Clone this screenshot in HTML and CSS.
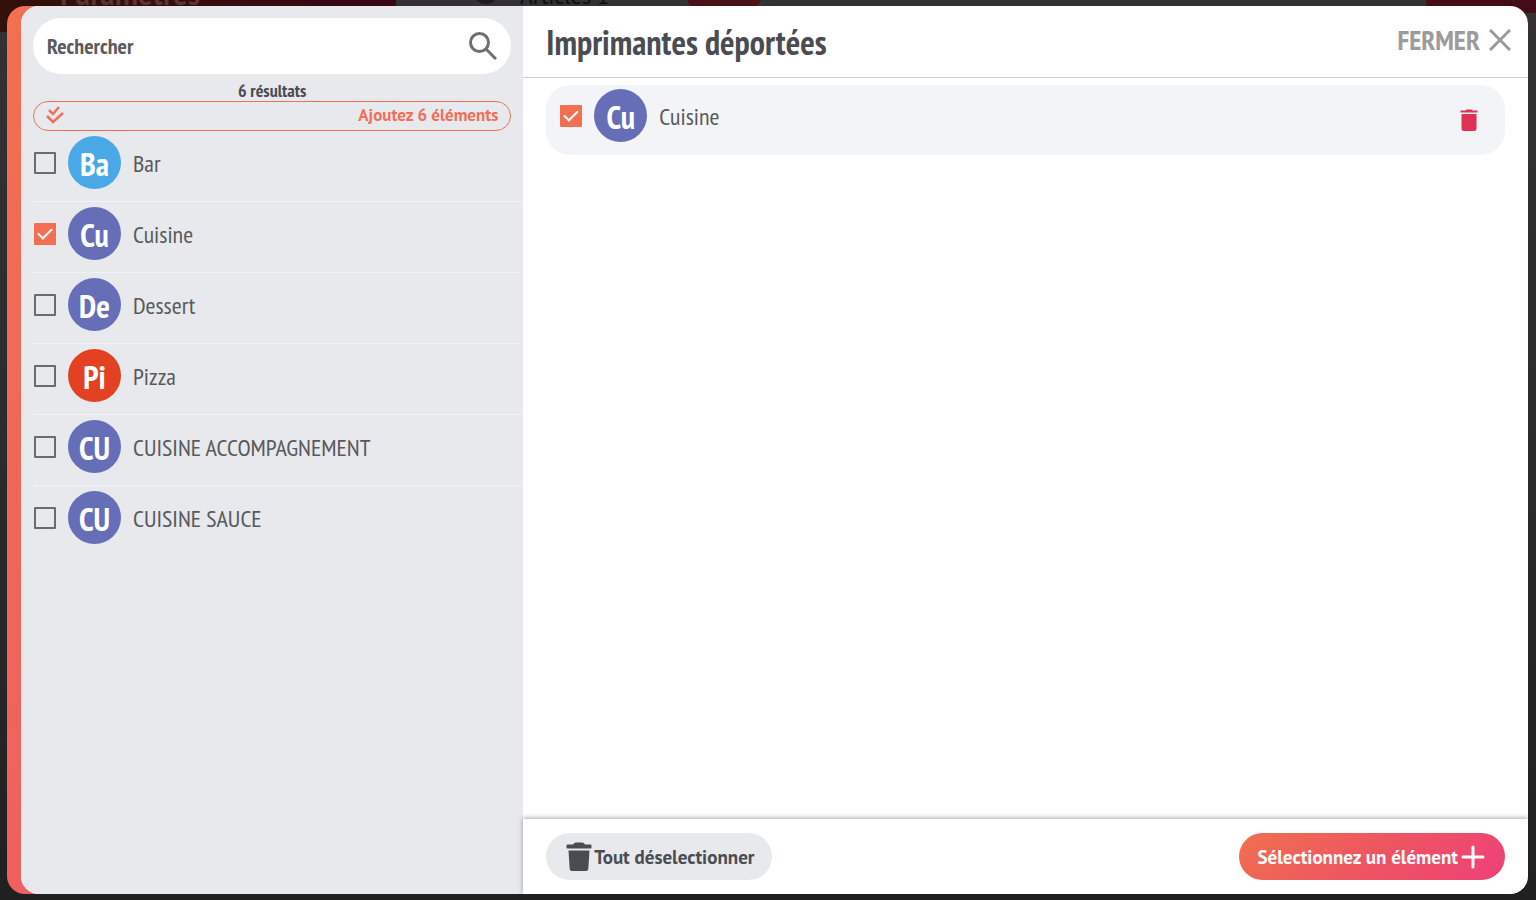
FILE: index.html
```html
<!DOCTYPE html>
<html lang="fr">
<head>
    <meta charset="UTF-8">
    <meta name="viewport" content="width=device-width, initial-scale=1.0">
    <title>Imprimantes déportées</title>
    <link rel="stylesheet" href="styles.css">
</head>
<body>

<!-- Page behind the dialog -->
<div class="backdrop" aria-hidden="true">
    <div class="backdrop-title">Paramètres</div>
    <div class="backdrop-dot"></div>
    <div class="backdrop-tab">Articles 1</div>
    <div class="backdrop-badge"></div>
    <div class="backdrop-action"></div>
</div>

<div class="dialog" role="dialog" aria-labelledby="title">
    <div class="content">

        <aside class="sidebar">
            <div class="search">
                <input type="text" class="search-input" placeholder="Rechercher" aria-label="Rechercher">
                <svg class="search-icon" viewBox="0 0 28 28">
                    <circle cx="10.5" cy="10.5" r="9" />
                    <path d="M17 17l10 10" />
                </svg>
            </div>
            <p class="results">6 résultats</p>
            <button class="add-all">
                <svg class="add-icon" viewBox="0 0 18 18">
                    <path d="M3 4l4 4 6-7" />
                    <path d="M1 10l6 6L17 7" />
                </svg>
                <span>Ajoutez 6 éléments</span>
            </button>

            <ul class="list">
                <li class="item">
                    <input type="checkbox" class="check" id="bar">
                    <span class="avatar blue">Ba</span>
                    <label for="bar">Bar</label>
                </li>
                <li class="item">
                    <input type="checkbox" class="check" id="cuisine" checked>
                    <span class="avatar">Cu</span>
                    <label for="cuisine">Cuisine</label>
                </li>
                <li class="item">
                    <input type="checkbox" class="check" id="dessert">
                    <span class="avatar">De</span>
                    <label for="dessert">Dessert</label>
                </li>
                <li class="item">
                    <input type="checkbox" class="check" id="pizza">
                    <span class="avatar red">Pi</span>
                    <label for="pizza">Pizza</label>
                </li>
                <li class="item">
                    <input type="checkbox" class="check" id="accompagnement">
                    <span class="avatar">CU</span>
                    <label for="accompagnement">CUISINE ACCOMPAGNEMENT</label>
                </li>
                <li class="item">
                    <input type="checkbox" class="check" id="sauce">
                    <span class="avatar">CU</span>
                    <label for="sauce">CUISINE SAUCE</label>
                </li>
            </ul>
        </aside>

        <main class="main">
            <header class="header">
                <h1 id="title">Imprimantes déportées</h1>
                <button class="close">
                    <span>FERMER</span>
                    <svg class="close-icon" viewBox="0 0 22 22">
                        <path d="M1 1l20 20M21 1L1 21" />
                    </svg>
                </button>
            </header>

            <div class="selection">
                <div class="card">
                    <input type="checkbox" class="check" id="selected-cuisine" checked>
                    <span class="avatar">Cu</span>
                    <label for="selected-cuisine">Cuisine</label>
                    <button class="remove" aria-label="Supprimer">
                        <svg viewBox="0 0 18 22">
                            <path d="M0.500 1.500h5l1-1h5l1 1h5v2h-17zM1.500 5h15v14.500a2.500 2.500 0 0 1-2.500 2.500h-10a2.500 2.500 0 0 1-2.500-2.500z" />
                        </svg>
                    </button>
                </div>
            </div>

            <footer class="footer">
                <button class="btn clear">
                    <svg class="trash-icon" viewBox="0 0 26 30">
                        <path d="M1.500 2.500h5.500q1-2 3-2h6q2 0 3 2h5.500q1 0 1 1v2q0 1-1 1h-23q-1 0-1-1v-2q0-1 1-1zM2.500 8.500h21l-1.200 18.500q-.2 2-2.200 2h-14.200q-2 0-2.200-2z" />
                    </svg>
                    <span>Tout déselectionner</span>
                </button>
                <button class="btn select">
                    <span>Sélectionnez un élément</span>
                    <svg class="plus-icon" viewBox="0 0 24 24">
                        <path d="M12 2v20M2 12h20" />
                    </svg>
                </button>
            </footer>
        </main>

    </div>
</div>

</body>
</html>
```
FILE: styles.css
```css
* {
    box-sizing: border-box;
}
body {
    margin: 0;
    height: 100vh;
    overflow: hidden;
    display: flex;
    padding: 6px 8px 6px 7px;
    background: linear-gradient(#343132, #2b2b2d 50%, #202021);
    font-family: "PT Sans Narrow", "Open Sans", sans-serif;
    color: #4b4c52;
}
button {
    border: none;
    background: none;
    padding: 0;
    font-family: inherit;
    color: inherit;
    cursor: pointer;
}
svg {
    display: block;
    fill: none;
    stroke: currentColor;
}

/* Dimmed page behind */
.backdrop {
    position: absolute;
    top: 0;
    left: 0;
    right: 0;
    height: 32px;
    overflow: hidden;
}
.backdrop div {
    position: absolute;
}
.backdrop-title {
    top: -26px;
    left: 0;
    width: 396px;
    height: 58px;
    padding-left: 60px;
    background: linear-gradient(90deg, #321109, #3a0714);
    color: #5a3534;
    font: bold 29px/40px "PT Sans", "Open Sans", sans-serif;
}
.backdrop-dot {
    top: -18px;
    left: 474px;
    width: 24px;
    height: 22px;
    border-radius: 50%;
    background: #1c1a1b;
}
.backdrop-tab {
    top: -16px;
    left: 520px;
    color: #0c0c0c;
    font: 22px/24px "PT Sans", "Open Sans", sans-serif;
}
.backdrop-badge {
    top: -20px;
    left: 686px;
    width: 76px;
    height: 30px;
    border-radius: 16px;
    background: #4c1019;
}
.backdrop-action {
    top: -20px;
    right: 0;
    width: 110px;
    height: 33px;
    border-radius: 0 0 0 12px;
    background: #430c18;
}

/* Dialog */
.dialog {
    position: relative;
    flex: 1;
    display: flex;
    padding-left: 14px;
    border-radius: 18px;
    overflow: hidden;
    background: linear-gradient(#f26f51, #ef6060);
}
.content {
    flex: 1;
    display: flex;
    border-radius: 18px;
    overflow: hidden;
    background: #fff;
}
.sidebar {
    flex: none;
    width: calc(100% / 3);
    padding: 12px 0 0 12px;
    background: #e7e9ed;
}
.search {
    display: flex;
    align-items: center;
    height: 56px;
    margin-right: 12px;
    padding: 0 14px;
    border-radius: 28px;
    background: #fff;
}
.search-input {
    flex: 1;
    min-width: 0;
    border: none;
    outline: none;
    padding: 0;
    background: none;
    font-family: inherit;
    font-size: 22px;
    font-weight: bold;
    line-height: 28px;
}
.search-input::placeholder {
    color: #5c5c5e;
    opacity: 1;
}
.search-icon {
    width: 28px;
    height: 28px;
    color: #6f6f70;
    stroke-width: 3;
}
.results {
    margin: 7px 12px 0 0;
    text-align: center;
    font-size: 18px;
    font-weight: bold;
    line-height: 20px;
}
.add-all {
    display: flex;
    align-items: center;
    justify-content: space-between;
    width: calc(100% - 12px);
    height: 30px;
    padding: 0 12px 2px;
    border: 1px solid #f26f57;
    border-radius: 15px;
    color: #f26f57;
    font: bold 17px/24px "PT Sans", "Open Sans", sans-serif;
}
.add-icon {
    width: 18px;
    height: 18px;
    stroke-width: 2.5;
}
.list {
    margin: 0;
    padding: 0;
    list-style: none;
}
.item {
    display: flex;
    height: 71px;
    padding: 5px 0 0 1px;
    border-bottom: 1px solid #f0f2f5;
}
.item:last-child {
    border-bottom: none;
}
.item label,
.card label {
    flex: 1;
    margin-left: 12px;
    font-size: 24px;
    line-height: 56px;
    color: #58595c;
}
.check {
    appearance: none;
    width: 22px;
    height: 22px;
    margin: 16px 12px 0 0;
    border: 2px solid #6b6b6d;
    border-radius: 1px;
}
.check:checked {
    border: none;
    background: #f26f51;
}
.check:checked::before {
    content: "";
    display: block;
    box-sizing: border-box;
    width: 14px;
    height: 8px;
    margin: 5px 0 0 4px;
    border-left: 2px solid #fff;
    border-bottom: 2px solid #fff;
    transform: rotate(-45deg);
}
.avatar {
    width: 53px;
    height: 53px;
    border-radius: 50%;
    background: #666eb7;
    color: #fff;
    font-size: 32px;
    font-weight: bold;
    line-height: 56px;
    text-align: center;
}
.blue {
    background: #49a8e5;
}
.red {
    background: #e34222;
}

/* Right side */
.main {
    flex: 1;
    display: flex;
    flex-direction: column;
}
.header {
    display: flex;
    justify-content: space-between;
    align-items: center;
    height: 72px;
    padding: 0 17px 0 23px;
    border-bottom: 1px solid #d0d1d2;
}
.header h1 {
    margin: 0;
    font-size: 34px;
    line-height: 40px;
}
.close {
    display: flex;
    align-items: center;
    gap: 9px;
    padding-bottom: 3px;
    color: #9c9c9c;
    font-size: 28px;
    font-weight: bold;
    line-height: 32px;
}
.close-icon {
    width: 22px;
    height: 22px;
    stroke-width: 3;
}
.selection {
    flex: 1;
    padding: 7px 23px;
}
.card {
    display: flex;
    height: 70px;
    padding: 4px 27px 0 14px;
    border-radius: 24px;
    background: #f3f4f8;
}
.remove {
    align-self: flex-start;
    margin-top: 20px;
    color: #df3155;
}
.remove svg {
    width: 18px;
    height: 22px;
    fill: currentColor;
    stroke: none;
}
.footer {
    display: flex;
    justify-content: space-between;
    align-items: center;
    height: 75px;
    padding: 0 23px;
    background: #fff;
    box-shadow: 0 -1px 5px rgba(0, 0, 0, 0.35);
}
.btn {
    display: flex;
    align-items: center;
    height: 47px;
    border-radius: 24px;
    font: bold 19px/24px "PT Sans", "Open Sans", sans-serif;
}
.clear {
    padding: 0 18px 0 20px;
    background: #e7e9ed;
}
.trash-icon {
    width: 26px;
    height: 30px;
    margin-right: 2px;
    fill: currentColor;
    stroke: none;
}
.select {
    padding: 0 20px 0 19px;
    background: linear-gradient(135deg, #ef7050, #ee5560 50%, #ee4079);
    color: #fff;
}
.plus-icon {
    width: 24px;
    height: 24px;
    margin-left: 3px;
    stroke-width: 3;
    stroke-linecap: round;
}
```
